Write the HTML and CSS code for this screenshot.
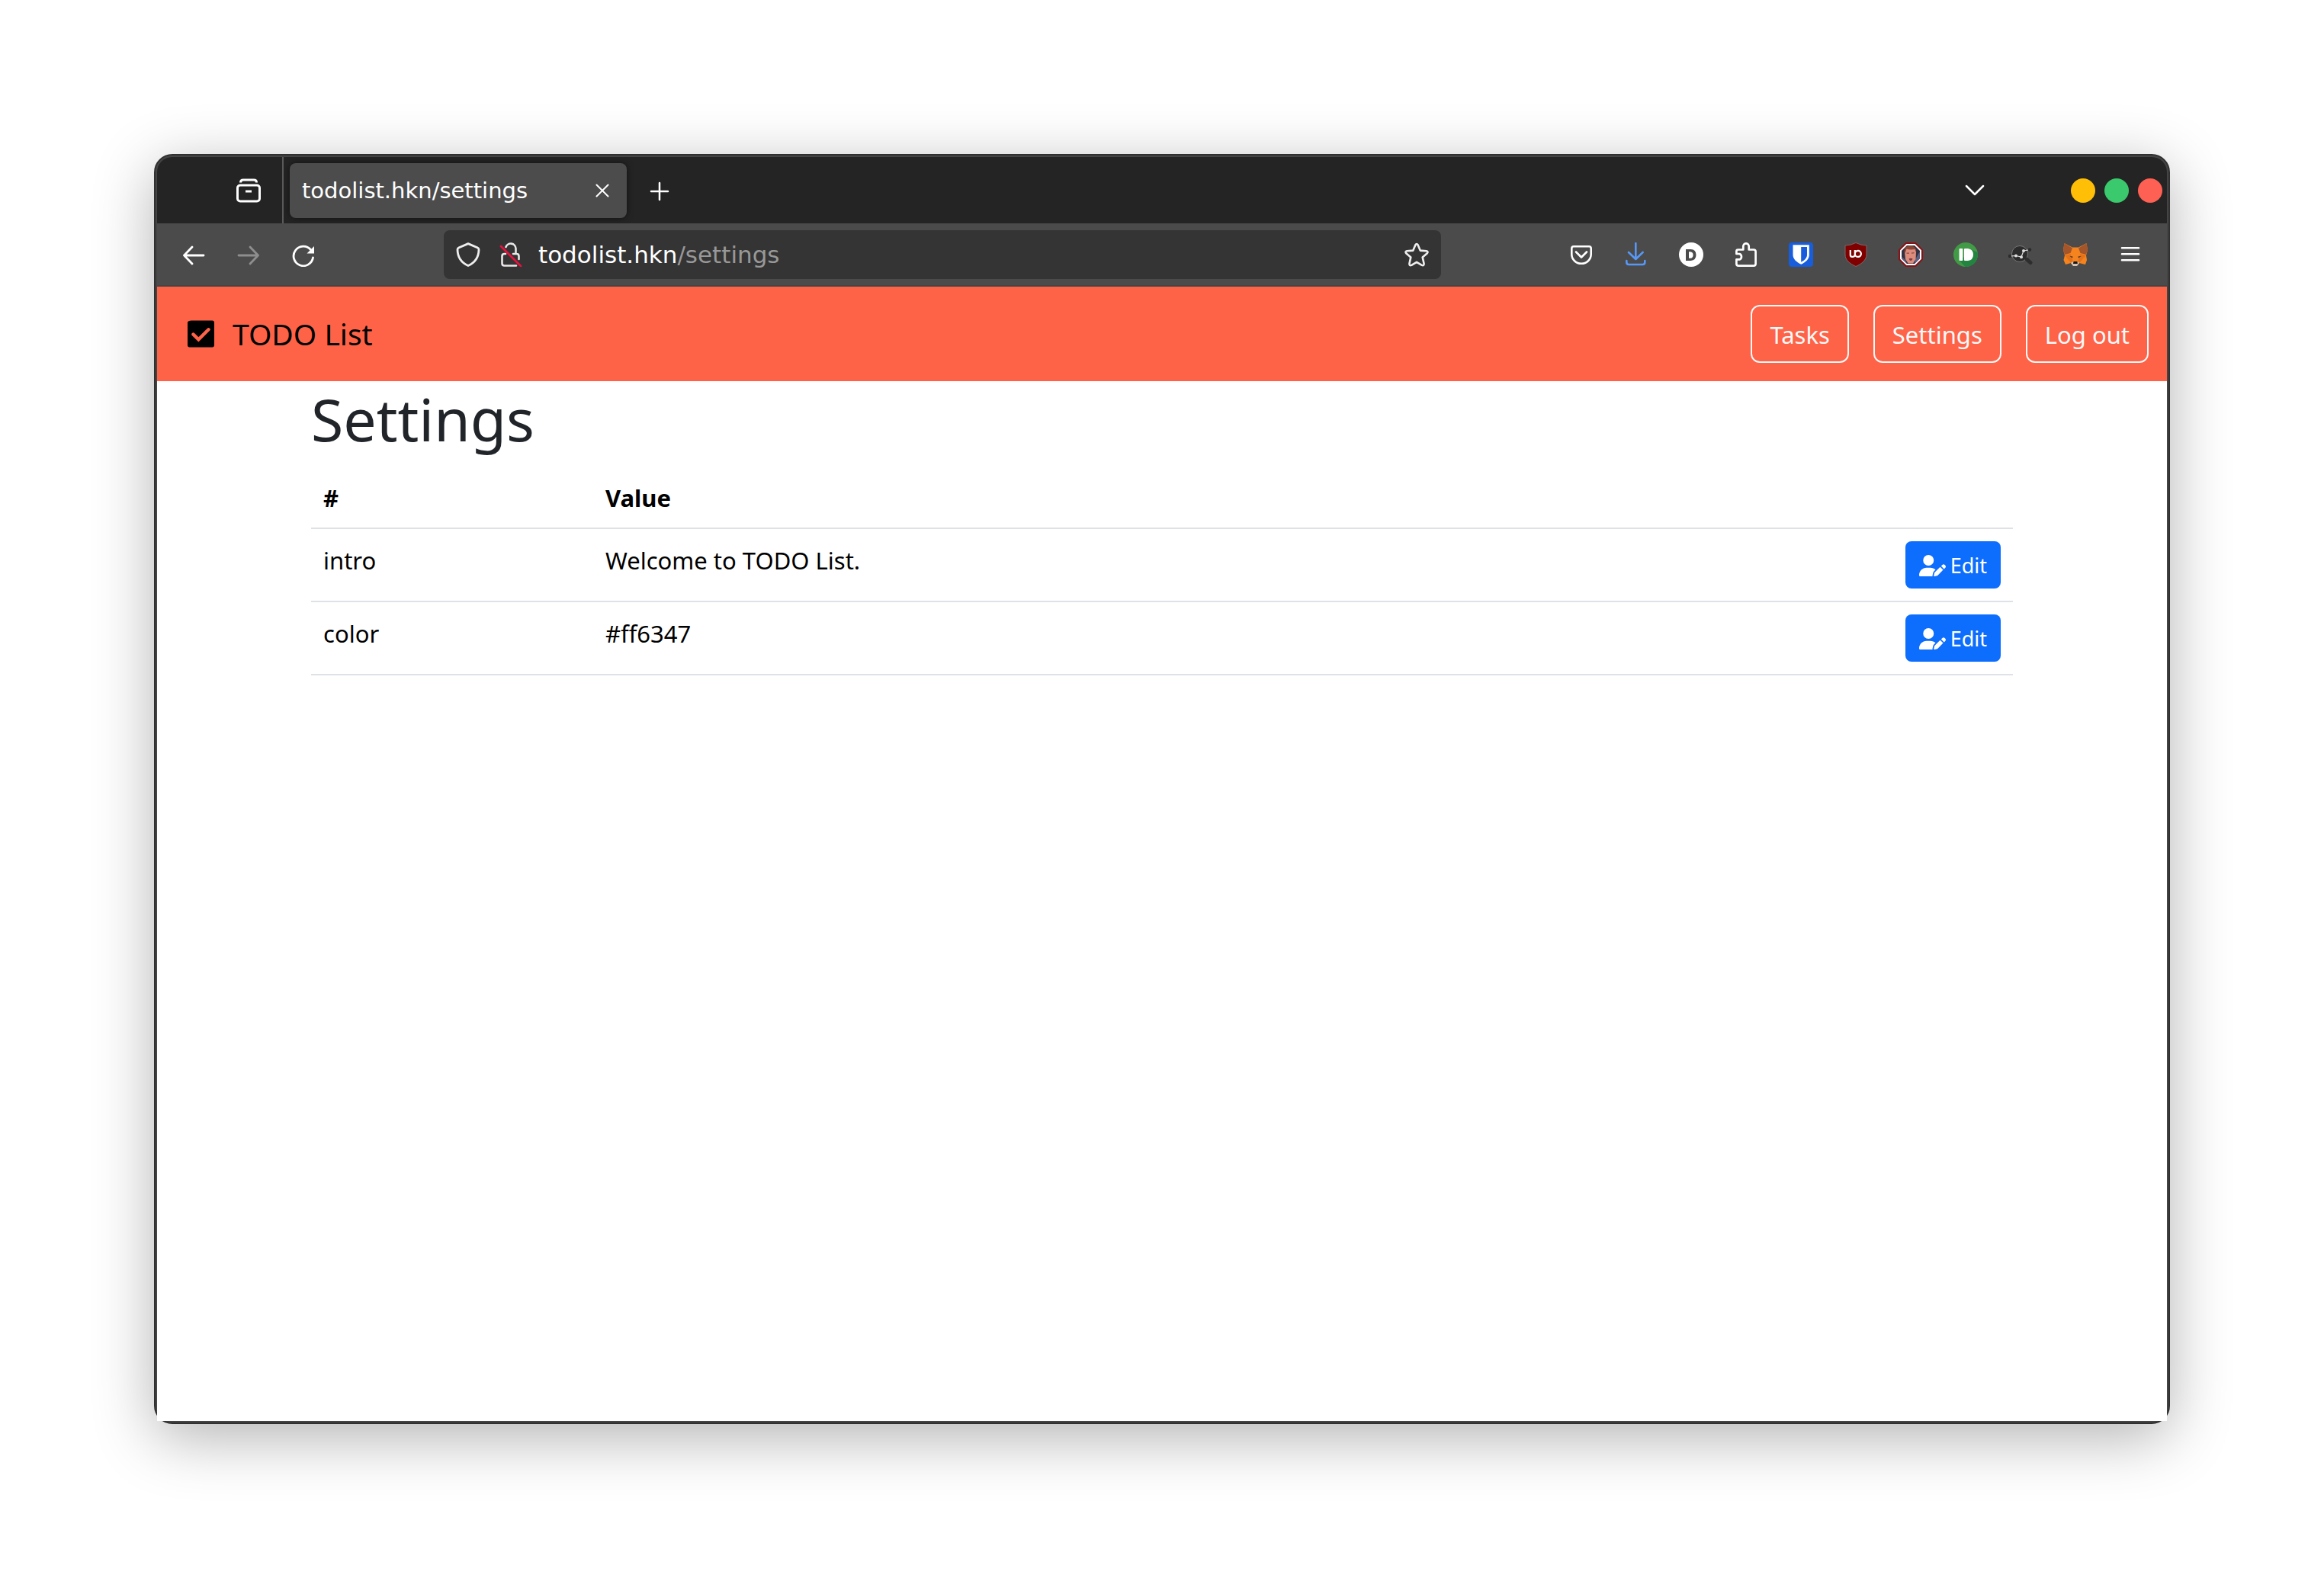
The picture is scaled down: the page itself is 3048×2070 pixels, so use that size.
FILE: index.html
```html
<!DOCTYPE html>
<html lang="en">
<head>
<meta charset="utf-8">
<title>todolist.hkn/settings</title>
<link rel="stylesheet" href="styles.css">
</head>
<body>
<div class="window">
<div class="frame">
  <div class="tabbar">
    <button class="icon-btn" aria-label="Firefox View">
      <svg viewBox="0 0 32 32" fill="none" stroke="#fff" stroke-width="3"><path d="M5.500 5.500Q5.500 2 9 2H23Q26.500 2 26.500 5.500" stroke-width="3"/><rect x="1.500" y="9" width="29" height="21" rx="3.500"/><path d="M12 17h8"/></svg>
    </button>
    <span class="divider"></span>
    <div class="tab" role="tab" aria-selected="true">
      <span class="tab-title">todolist.hkn/settings</span>
      <button class="icon-btn" aria-label="Close tab">
        <svg viewBox="0 0 32 32" fill="none" stroke="#fff" stroke-width="2" stroke-linecap="round"><path d="M8.500 8.500L23.500 23.500M23.500 8.500L8.500 23.500"/></svg>
      </button>
    </div>
    <button class="icon-btn new-tab" aria-label="New tab">
      <svg viewBox="0 0 32 32" fill="none" stroke="#fff" stroke-width="2.500" stroke-linecap="round"><path d="M16 6V28M5 17H27"/></svg>
    </button>
    <button class="icon-btn list-tabs" aria-label="List all tabs">
      <svg viewBox="0 0 32 32" fill="none" stroke="#fff" stroke-width="2.500" stroke-linecap="round" stroke-linejoin="round"><path d="M5 10L16 21L27 10"/></svg>
    </button>
    <div class="controls">
      <button class="control minimize" aria-label="Minimize"></button>
      <button class="control maximize" aria-label="Maximize"></button>
      <button class="control close" aria-label="Close"></button>
    </div>
  </div>
  <div class="toolbar">
    <div class="tools">
      <button class="icon-btn" aria-label="Back">
        <svg viewBox="0 0 32 32" fill="none" stroke="#fff" stroke-width="2.800" stroke-linecap="round" stroke-linejoin="round"><path d="M14 6L3.500 17L14 28M3.500 17H29"/></svg>
      </button>
      <button class="icon-btn" aria-label="Forward">
        <svg viewBox="0 0 32 32" fill="none" stroke="#8e8e8e" stroke-width="2.800" stroke-linecap="round" stroke-linejoin="round"><path d="M18 6L28.500 17L18 28M28.500 17H3"/></svg>
      </button>
      <button class="icon-btn" aria-label="Reload">
        <svg viewBox="0 0 32 32" fill="none" stroke="#fff" stroke-width="2.800" stroke-linecap="round"><path d="M28.500 20A12.800 12.800 0 1 1 25.500 9.500"/><path d="M30 5V14.500H20.500Z" fill="#fff" stroke="none"/></svg>
      </button>
    </div>
    <div class="urlbar">
      <svg class="icon" viewBox="0 0 32 32" fill="none" stroke="#eee" stroke-width="2.800" stroke-linejoin="round"><path d="M16 1.600L28.500 7Q30 7.600 30 9.500C29.800 19 25 26.500 16 30.500C7 26.500 2.200 19 2 9.500Q2 7.600 3.500 7Z"/></svg>
      <svg class="icon" viewBox="0 0 32 32" fill="none" stroke="#e8e8e8" stroke-width="2.600" stroke-linecap="round"><path d="M9.500 6A6.700 6.700 0 0 1 22.500 8V15M19 15H23.500Q26.500 15 26.500 18V22M9 15H7.500Q4.500 15 4.500 18V27.500Q4.500 30.500 7.500 30.500H23"/><path d="M3 5L29 31" stroke="#e8113e" stroke-width="2.600"/></svg>
      <div class="address" role="textbox" contenteditable="true" spellcheck="false" aria-label="Address">todolist.hkn<span class="path">/settings</span></div>
      <button class="icon-btn" aria-label="Bookmark this page">
        <svg viewBox="0 0 32 32" fill="none" stroke="#eee" stroke-width="2.600" stroke-linejoin="round"><path d="M14.400 3.300Q16 0.800 17.600 3.300L20.700 10.600L28.800 11.300Q31.600 12 29.800 14.200L23.700 19.400L25.600 28Q25.600 31 22.800 29.900L16 25.800L9.200 29.900Q6.400 31 6.400 28L8.300 19.400L2.200 14.200Q0.400 12 3.200 11.300L11.300 10.600Z"/></svg>
      </button>
    </div>
    <div class="tools">
      <button class="icon-btn" aria-label="Save to Pocket">
        <svg viewBox="0 0 32 32" fill="none" stroke="#fff" stroke-width="2.600" stroke-linecap="round" stroke-linejoin="round"><path d="M6 5.300H26Q28.700 5.300 28.700 8V15.500A12.700 12.300 0 0 1 3.300 15.500V8Q3.300 5.300 6 5.300Z"/><path d="M9 12.500L16 19.500L23 12.500"/></svg>
      </button>
      <button class="icon-btn" aria-label="Downloads">
        <svg viewBox="0 0 32 32" fill="none" stroke="#5797f6" stroke-width="2.600" stroke-linecap="round" stroke-linejoin="round"><path d="M15.300 1V22M6 13L15.300 22L24.600 13M3.300 24V26Q3.300 29 6.300 29H24.300Q27.300 29 27.300 26V24"/></svg>
      </button>
      <button class="icon-btn" aria-label="Dashlane">
        <svg viewBox="0 0 32 32"><circle cx="16" cy="16" r="16" fill="#fff"/><path d="M9 9H15.500Q22.500 9.400 22.500 16.300Q22.500 23.600 15.500 24H9ZM13 12.300V20.800H15Q18.600 20.500 18.600 16.500Q18.600 12.600 15 12.300Z" fill="#4b4b4b" fill-rule="evenodd"/></svg>
      </button>
      <button class="icon-btn" aria-label="Extensions">
        <svg viewBox="0 0 32 32" fill="none" stroke="#fff" stroke-width="2.700" stroke-linejoin="round"><path d="M5.500 9.500H12.300V5A3.700 3.700 0 0 1 19.700 5V9.500H26Q28.600 9.500 28.600 12V28Q28.600 30.600 26 30.600H6Q3.400 30.600 3.400 28V22.400H7.500A4 4 0 0 0 7.500 15H3.400V11.500Q3.400 9.500 5.500 9.500Z"/></svg>
      </button>
      <button class="icon-btn" aria-label="Bitwarden">
        <svg viewBox="0 0 32 32"><rect width="32" height="32" rx="4" fill="#175ddc"/><path d="M5.500 3.300H26.800V16.500C26.800 22 22 26 16.200 28.700C10.500 26 5.500 22 5.500 16.500Z" fill="#fff"/><path d="M16.200 6H24V16.500C24 20.500 20.500 23.500 16.200 25.700Z" fill="#175ddc"/></svg>
      </button>
      <button class="icon-btn" aria-label="uBlock Origin">
        <svg viewBox="0 0 32 32"><path d="M16 .5Q23 4 30 4V16C30 23 24 28 16 31.500C8 28 2 23 2 16V4Q9 4 16 .5Z" fill="#800000" stroke="#79686a" stroke-width="1"/><path d="M8.800 10V16.500Q8.800 18.900 11.500 18.900T14.800 16.500V10M14.800 15A4 4 0 1 0 22.900 14.800A4 4 0 1 0 14.800 15" fill="none" stroke="#fff" stroke-width="2.200"/></svg>
      </button>
      <button class="icon-btn" aria-label="Rickroll blocker">
        <svg viewBox="0 0 32 32"><path d="M9.500 0H22.500L32 9.500V22.500L22.500 32H9.500L0 22.500V9.500Z" fill="#8a1114"/><path d="M10.300 2H21.700L30 10.300V21.700L21.700 30H10.300L2 21.700V10.300Z" fill="#fff"/><path d="M11 4H21L28 11V21L21 28H11L4 21V11Z" fill="#343241"/><path d="M4.500 19L9 23L11 28L4 21ZM28 12V21L21 28L22 22Z" fill="#5b5f80"/><path d="M8 12Q8 5.500 15 5.500Q22.500 5.500 23 13L22.500 22L19 27.500H12.500L9 22Z" fill="#dd8c7c"/><path d="M7.500 13Q7 4.500 15 4.200Q23.500 4 23.300 13L21.500 9Q15 10 10.500 8.500L8.800 13.500Z" fill="#8a4535"/><path d="M10.500 14.200H14M17 14.200L20.500 13.600" stroke="#8a4a44" stroke-width="1.300" fill="none"/><path d="M13.500 21.500Q16 20 18.500 21.500Q17.500 24 16 24T13.500 21.500Z" fill="#7a3c40"/></svg>
      </button>
      <button class="icon-btn" aria-label="Pushbullet">
        <svg viewBox="0 0 32 32"><circle cx="16" cy="16" r="16" fill="#419a45"/><path d="M8 24L15.500 32A16 16 0 0 0 31.700 13L24.500 10Z" fill="#22843f"/><rect x="7.500" y="8" width="4.800" height="16" rx="1" fill="#fff"/><path d="M15 8H19Q26 9 26 16T19 24H15Q14 24 14 23V9Q14 8 15 8Z" fill="#fff"/></svg>
      </button>
      <button class="icon-btn" aria-label="Graph inspector">
        <svg viewBox="0 0 32 32"><circle cx="15" cy="15" r="10.500" fill="#2c2c2c" stroke="#777" stroke-width="1"/><path d="M24.500 22.500L29 26.500" stroke="#2d2d2d" stroke-width="5" stroke-linecap="round"/><circle cx="2" cy="18" r="2.200" fill="#2c2c2c"/><circle cx="28" cy="9.500" r="2.200" fill="#2c2c2c"/><path d="M4 17.800L10 17.500L17 19L20 11L26 10" stroke="#ddd" stroke-width="1.200" fill="none"/><circle cx="10" cy="17.500" r="2" fill="#ddd"/><circle cx="17" cy="19.300" r="2" fill="#ddd"/><circle cx="20" cy="11" r="2" fill="#ddd"/></svg>
      </button>
      <button class="icon-btn" aria-label="MetaMask">
        <svg viewBox="0 0 32 32"><path d="M1.500 1L12 6.500H20L30.500 1L32 10L30 17L31 23L29 29L21 27L18 30.500H13L10 27L3 29L.5 23L2 17L0 10Z" fill="#f5841f"/><path d="M1.500 1L12 7.500L9.500 14L2 16L0 10ZM30.500 1L20 7.500L22.500 14L30 16L32 10Z" fill="#a4562a"/><path d="M9.500 15L13 25L10 27L2 17ZM22.500 15L19 25L21 27L30 17Z" fill="#e57218"/><path d="M8.500 18L12.500 18.500L12 20.500ZM23.500 18L19.500 18.500L20 20.500Z" fill="#3a3230"/><path d="M10 27L13 25H19L21 27L18 31H13Z" fill="#d5c1b2"/><path d="M13.500 25H18.500L18.800 28H13Z" fill="#161616"/></svg>
      </button>
      <button class="icon-btn" aria-label="Open application menu">
        <svg viewBox="0 0 32 32" fill="none" stroke="#fff" stroke-width="2.600" stroke-linecap="round"><path d="M5 7.300H27M5 15.300H27M5 23.300H27"/></svg>
      </button>
    </div>
  </div>

  <nav class="navbar">
    <a class="brand" href="#">
      <svg class="brand-icon" viewBox="0 0 448 512"><path d="M64 32C28.700 32 0 46 0 64V448C0 465 14 480 32 480H416C434 480 448 465 448 448V64C448 46 434 32 416 32Z"/><path d="M96 264L184 350L352 182" fill="none" stroke="#ff6347" stroke-width="56" stroke-linecap="round"/></svg>
      <span>TODO List</span>
    </a>
    <div class="nav-links">
      <a class="btn-outline" href="#">Tasks</a>
      <a class="btn-outline" href="#">Settings</a>
      <a class="btn-outline" href="#">Log out</a>
    </div>
  </nav>

  <main class="page">
    <div class="container">
      <h1>Settings</h1>
      <table class="table">
        <thead>
          <tr><th class="key" scope="col">#</th><th scope="col">Value</th><th scope="col"></th></tr>
        </thead>
        <tbody>
          <tr>
            <td>intro</td>
            <td>Welcome to TODO List.</td>
            <td class="actions"><button class="btn-primary"><svg class="edit-icon" viewBox="0 0 640 512" fill="#fff"><path d="M224 256A128 128 0 1 0 224 0a128 128 0 1 0 0 256zm-45.700 48C79.800 304 0 383.800 0 482.300C0 498.700 13.300 512 29.700 512H322.800c-3.100-8.800-3.700-18.400-1.400-27.800l15-60.100c2.800-11.300 8.600-21.500 16.800-29.700l40.300-40.300c-32.100-31-75.700-50.100-123.900-50.100H178.300zm435.500-68.300c-15.600-15.600-40.900-15.600-56.600 0l-29.400 29.400 71 71 29.400-29.400c15.600-15.600 15.600-40.900 0-56.600l-14.400-14.400zM375.900 417c-4.100 4.100-7 9.200-8.400 14.900l-15 60.100c-1.400 5.500.2 11.200 4.200 15.200s9.700 5.600 15.200 4.200l60.100-15c5.600-1.400 10.800-4.300 14.900-8.400L576.100 358.700l-71-71L375.900 417z"/></svg>Edit</button></td>
          </tr>
          <tr>
            <td>color</td>
            <td>#ff6347</td>
            <td class="actions"><button class="btn-primary"><svg class="edit-icon" viewBox="0 0 640 512" fill="#fff"><path d="M224 256A128 128 0 1 0 224 0a128 128 0 1 0 0 256zm-45.700 48C79.800 304 0 383.800 0 482.300C0 498.700 13.300 512 29.700 512H322.800c-3.100-8.800-3.700-18.400-1.400-27.800l15-60.100c2.800-11.300 8.600-21.500 16.800-29.700l40.300-40.300c-32.100-31-75.700-50.100-123.900-50.100H178.300zm435.500-68.300c-15.600-15.600-40.900-15.600-56.600 0l-29.400 29.400 71 71 29.400-29.400c15.600-15.600 15.600-40.900 0-56.600l-14.400-14.400zM375.900 417c-4.100 4.100-7 9.200-8.400 14.900l-15 60.100c-1.400 5.500.2 11.200 4.200 15.200s9.700 5.600 15.200 4.200l60.100-15c5.600-1.400 10.800-4.300 14.900-8.400L576.100 358.700l-71-71L375.900 417z"/></svg>Edit</button></td>
          </tr>
        </tbody>
      </table>
    </div>
  </main>
</div>
</div>
</body>
</html>
```
FILE: styles.css
```css
* { box-sizing: border-box; }

body {
  margin: 0;
  padding: 202px;
  min-height: 100vh;
  display: flex;
  background: #fff;
  color: #000;
  font-family: "Noto Sans", sans-serif;
  font-size: 31px;
  line-height: 48px;
}

button {
  margin: 0;
  padding: 0;
  border: 0;
  background: none;
  font: inherit;
  color: inherit;
}

a { color: inherit; text-decoration: none; }

svg { display: block; }

/* Browser window */
.window {
  flex: 1;
  min-width: 0;
  display: flex;
  border: 2px solid #303030;
  border-radius: 24px;
  background: #444;
  box-shadow: 0 18px 80px rgba(0, 0, 0, 0.3);
}

.frame {
  flex: 1;
  min-width: 0;
  display: flex;
  flex-direction: column;
  border: 2px solid #444;
  border-radius: 22px;
}

.icon-btn, .icon { width: 32px; height: 32px; flex: none; }

.tabbar {
  display: flex;
  align-items: center;
  height: 87px;
  padding: 0 6px 0 104px;
  border-radius: 20px 20px 0 0;
  background: #242424;
}

.divider {
  align-self: stretch;
  width: 2px;
  margin: 0 8px 0 28px;
  background: #5a5a5a;
}

.tab {
  display: flex;
  align-items: center;
  justify-content: space-between;
  width: 442px;
  height: 72px;
  padding: 0 16px;
  border-radius: 8px;
  background: #4c4c4c;
  box-shadow: 0 0 8px rgba(0, 0, 0, 0.5);
  color: #fff;
  font-family: "DejaVu Sans", sans-serif;
  font-size: 29px;
}

.new-tab { margin-left: 27px; }

.list-tabs { margin: 0 110px 0 auto; }

.controls { display: flex; gap: 12px; }

.control { width: 32px; height: 32px; border-radius: 50%; }
.minimize { background: #ffbf06; }
.maximize { background: #3ac96c; }
.close { background: #ff6054; }

.toolbar {
  display: flex;
  align-items: center;
  gap: 168px;
  height: 83px;
  padding: 0 32px;
  border-bottom: 2px solid #444;
  background: #4b4b4b;
}

.tools { display: flex; gap: 40px; }

.urlbar {
  flex: 1;
  min-width: 0;
  display: flex;
  align-items: center;
  gap: 24px;
  height: 64px;
  padding: 0 16px;
  border-radius: 8px;
  background: #343434;
}

.address {
  flex: 1;
  margin-left: -4px;
  color: #fff;
  font-family: "DejaVu Sans", sans-serif;
  font-size: 31px;
  white-space: nowrap;
}

.path { color: #989898; }

/* Application */
.navbar {
  display: flex;
  align-items: center;
  justify-content: space-between;
  padding: 24px 24px 24px 40px;
  background: #ff6347;
}

.brand {
  display: flex;
  align-items: center;
  gap: 24px;
  font-size: 39px;
}

.brand-icon { width: 35px; height: 40px; }

.nav-links { display: flex; gap: 32px; }

.btn-outline {
  padding: 13px 23px 11px;
  border: 2px solid #f8f9fa;
  border-radius: 12px;
  color: #f8f9fa;
}

.page { flex: 1; background: #fff; }

.container {
  max-width: 2280px;
  margin: 0 auto;
  padding: 0 24px;
}

h1 {
  margin: 0;
  padding: 2px 0 14px;
  color: #212529;
  font-size: 77px;
  font-weight: 400;
  line-height: 96px;
}

.table { width: 100%; border-collapse: separate; border-spacing: 0; }

.table th, .table td {
  padding: 17px 16px 15px;
  border-bottom: 2px solid #dee2e6;
  text-align: left;
  vertical-align: top;
}

.table .key { width: 370px; }

.table .actions {
  padding-top: 16px;
  padding-bottom: 16px;
  text-align: right;
}

.btn-primary {
  display: inline-flex;
  align-items: center;
  gap: 6px;
  padding: 11px 18px 9px;
  border-radius: 8px;
  background: #0d6efd;
  color: #fff;
  font-size: 27px;
  line-height: 42px;
  vertical-align: top;
}

.edit-icon { width: 35px; height: 28px; }
```
